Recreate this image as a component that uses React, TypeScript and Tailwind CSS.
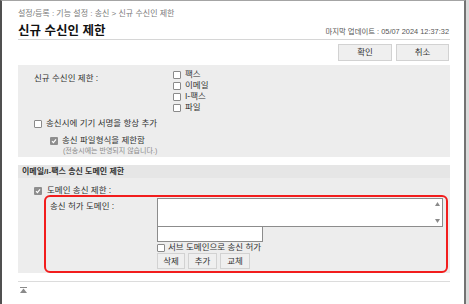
import React from 'react';

function Box({ checked = false }: { checked?: boolean }) {
    if (checked) {
        return (
            <span className="inline-flex w-[8px] h-[8px] shrink-0 items-center justify-center rounded-[1px] bg-[#8e8e8e]">
                <svg width="6" height="6" viewBox="0 0 6 6">
                    <path d="M1 3.2 L2.4 4.6 L5 1.4" fill="none" stroke="#fff" strokeWidth="1.2" />
                </svg>
            </span>
        );
    }
    return <span className="inline-block w-[8px] h-[8px] shrink-0 rounded-[1px] border border-[#8a8a8a] bg-white" />;
}

function Btn({ label, w }: { label: string; w: string }) {
    return (
        <div className={`${w} flex items-center justify-center border border-[#d2d2d2] bg-[#efefef] text-[#333]`}>
            {label}
        </div>
    );
}

export default function App() {
    const targets = ['팩스', '이메일', 'I-팩스', '파일'];

    return (
        <div className="w-[469px] h-[304px] overflow-hidden bg-[#dadada] font-['Liberation_Sans','Noto_Sans_CJK_KR',sans-serif] text-[#333]">
            <div className="w-[466px] h-full bg-white border-l-2 border-l-[#505050] border-t border-t-[#a4a4a4] border-r-2 border-r-[#737373] pl-[16px] pr-[14px]">
                <div className="pt-[7px] text-[8px] leading-[11px] text-[#7a7a7a]">
                    설정/등록 : 기능 설정 : 송신 &gt; 신규 수신인 제한
                </div>

                <div className="mt-[5px] flex items-end justify-between border-b border-[#d6d6d6]">
                    <h1 className="text-[12.5px] leading-[15px] font-bold text-[#111]">신규 수신인 제한</h1>
                    <span className="mb-[2px] mr-[1px] text-[7.4px] leading-[11px] text-[#555]">
                        마지막 업데이트 : 05/07 2024 12:37:32
                    </span>
                </div>

                <div className="mt-[4px] mr-[1px] flex justify-end gap-[4px] text-[8.5px]">
                    <Btn label="확인" w="w-[54px] h-[17px]" />
                    <Btn label="취소" w="w-[53px] h-[17px]" />
                </div>

                <div className="mt-[4px] h-[92px] bg-[#ededed] pl-[16px] pt-[4px] text-[8.5px] leading-[11px]">
                    <div className="flex">
                        <div className="w-[139px] pt-[4px]">신규 수신인 제한 :</div>
                        <div>
                            {targets.map(t => (
                                <div key={t} className="flex h-[11px] items-center gap-[4px]">
                                    <Box />
                                    <span>{t}</span>
                                </div>
                            ))}
                        </div>
                    </div>
                    <div className="mt-[5px] flex h-[11px] items-center gap-[4px]">
                        <Box />
                        <span>송신시에 기기 서명을 항상 추가</span>
                    </div>
                    <div className="mt-[6px] pl-[16px] flex h-[11px] items-center gap-[4px]">
                        <Box checked />
                        <span>송신 파일형식을 제한함</span>
                    </div>
                    <div className="pl-[29px] text-[7px] leading-[9px] text-[#8a8a8a]">
                        (전송시에는 반영되지 않습니다.)
                    </div>
                </div>

                <div className="mt-[8px] bg-[#ededed]">
                    <div className="h-[13px] pl-[4px] text-[8px] leading-[13px] font-bold text-[#333] bg-[#e6e6e6]">
                        이메일/I-팩스 송신 도메인 제한
                    </div>
                    <div className="pt-[7px] text-[8.5px] leading-[11px]">
                        <div className="pl-[16px] flex h-[11px] items-center gap-[5px]">
                            <Box checked />
                            <span>도메인 송신 제한 :</span>
                        </div>
                        <div className="-mt-[1px] ml-[26px] mr-[2px] flex rounded-[6px] border-2 border-[#f21d1d] pt-[1px] pb-[2px]">
                            <div className="w-[111px] pl-[4px] pt-[3px]">송신 허가 도메인 :</div>
                            <div className="flex-1 pr-[3px]">
                                <div className="flex h-[29px] border border-[#8c8c8c] bg-white">
                                    <div className="flex-1" />
                                    <div className="flex w-[9px] flex-col items-center justify-between py-[3px]">
                                        <svg width="5" height="4" viewBox="0 0 5 4"><path d="M2.5 0 L5 4 L0 4 Z" fill="#8a8a8a" /></svg>
                                        <svg width="5" height="4" viewBox="0 0 5 4"><path d="M0 0 L5 0 L2.5 4 Z" fill="#8a8a8a" /></svg>
                                    </div>
                                </div>
                                <div className="h-[15px] w-[106px] border border-[#8c8c8c] border-t-0 bg-white" />
                                <div className="flex h-[11px] items-center gap-[3px]">
                                    <Box />
                                    <span>서브 도메인으로 송신 허가</span>
                                </div>
                                <div className="flex h-[16px] gap-[3px]">
                                    <Btn label="삭제" w="w-[28px]" />
                                    <Btn label="추가" w="w-[29px]" />
                                    <Btn label="교체" w="w-[30px]" />
                                </div>
                            </div>
                        </div>
                    </div>
                </div>

                <div className="mt-[8px] border-t border-[#dcdcdc] pt-[5px] pl-[2px]">
                    <svg width="7" height="6" viewBox="0 0 7 6">
                        <rect x="0" y="0" width="7" height="1" fill="#8a8a8a" />
                        <path d="M3.5 1.5 L7 6 L0 6 Z" fill="#8a8a8a" />
                    </svg>
                </div>
            </div>
        </div>
    );
}
